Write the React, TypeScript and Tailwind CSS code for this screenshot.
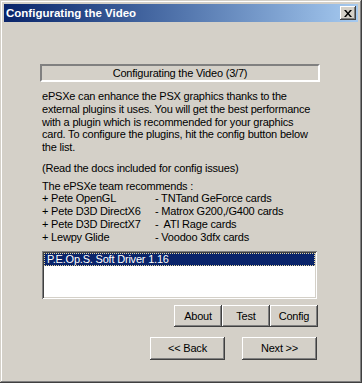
import { ReactNode } from 'react';

const FACE = 'bg-[#d4d0c8]';

function Btn({ children, className = '' }: { children: ReactNode; className?: string }) {
  return (
    <button
      className={`${FACE} flex items-center justify-center text-black shadow-[inset_-1px_-1px_#404040,inset_1px_1px_#ffffff,inset_-2px_-2px_#808080,inset_2px_2px_#d4d0c8] ${className}`}
    >
      {children}
    </button>
  );
}

const RECOMMENDED = [
  ['+ Pete OpenGL', '- TNTand GeForce cards'],
  ['+ Pete D3D DirectX6', '- Matrox G200,/G400 cards'],
  ['+ Pete D3D DirectX7', '-  ATI Rage cards'],
  ['+ Lewpy Glide', '- Voodoo 3dfx cards'],
];

export default function App() {
  return (
    <div
      className={`${FACE} w-[362px] h-[383px] p-[4px] flex flex-col font-['Liberation_Sans',Arial,sans-serif] text-[11px] leading-[12.75px] tracking-[-0.2px] text-black shadow-[inset_-1px_-1px_#404040,inset_1px_1px_#d4d0c8,inset_-2px_-2px_#808080,inset_2px_2px_#ffffff]`}
    >
      {/* caption */}
      <div className="h-[18px] flex items-center justify-between pl-[2px] pr-[2px] bg-gradient-to-r from-[#0a246a] to-[#a6caf0]">
        <span className="text-white font-bold text-[11.5px] tracking-normal">Configurating the Video</span>
        <Btn className="w-[16px] h-[14px]">
          <svg width="8" height="7" viewBox="0 0 8 7">
            <path d="M0 0h2l2 2.5L6 0h2L5 3.5 8 7H6L4 4.5 2 7H0l3-3.5z" fill="#000" />
          </svg>
        </Btn>
      </div>

      <div className="flex flex-col ml-[36px] w-[280px] mt-[42px]">
        <div className="h-[18px] flex items-center justify-center pt-[1px] border-2 border-t-[#808080] border-l-[#808080] border-b-white border-r-white">
          Configurating the Video (3/7)
        </div>

        <p className="mt-[8px] pl-[2px] whitespace-nowrap">
          ePSXe can enhance the PSX graphics thanks to the
          <br />
          external plugins it uses. You will get the best performance
          <br />
          with a plugin which is recommended for your graphics
          <br />
          card. To configure the plugins, hit the config button below
          <br />
          the list.
        </p>

        <p className="mt-[8px] pl-[2px]">(Read the docs included for config issues)</p>

        <div className="mt-[5px] pl-[2px]">
          <div>The ePSXe team recommends :</div>
          {RECOMMENDED.map(([name, card]) => (
            <div key={name} className="grid grid-cols-[113px_1fr] whitespace-pre">
              <span>{name}</span>
              <span>{card}</span>
            </div>
          ))}
        </div>

        <div className="mt-[8px] ml-[2px] w-[275px] h-[48px] bg-white p-[2px] shadow-[inset_1px_1px_#808080,inset_-1px_-1px_#ffffff,inset_2px_2px_#404040,inset_-2px_-2px_#d4d0c8]">
          <div className="h-[13px] bg-[#0a246a] text-white pl-[2px] border border-dotted border-[#e6d7a0] leading-[11px]">
            P.E.Op.S. Soft Driver 1.16
          </div>
        </div>

        <div className="mt-[6px] flex justify-end pr-[2px]">
          <Btn className="w-[48px] h-[22px]">About</Btn>
          <Btn className="w-[48px] h-[22px]">Test</Btn>
          <Btn className="w-[48px] h-[22px]">Config</Btn>
        </div>

        <div className="mt-[10px] flex justify-end gap-[17px] pr-[3px]">
          <Btn className="w-[75px] h-[23px]">&lt;&lt; Back</Btn>
          <Btn className="w-[75px] h-[23px]">Next &gt;&gt;</Btn>
        </div>
      </div>
    </div>
  );
}
